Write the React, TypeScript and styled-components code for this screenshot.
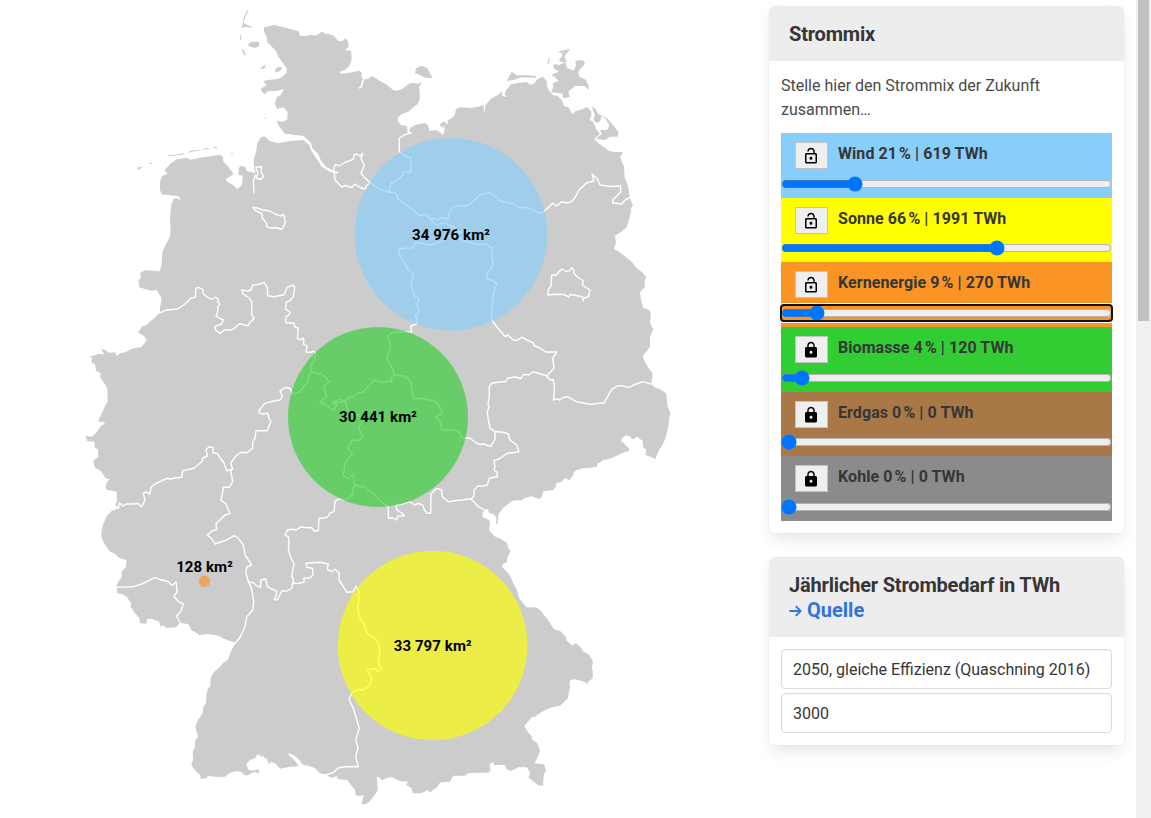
import React, { useState } from "react";
import styled, { createGlobalStyle } from "styled-components";
import { MdLock, MdLockOpen } from "react-icons/md";

const GlobalStyle = createGlobalStyle`
  *, *::before, *::after { box-sizing: border-box; }
  html, body { margin: 0; height: 100%; overflow: hidden; background: #fff; }
  body {
    font-family: Roboto, "Liberation Sans", sans-serif;
    font-size: 16px;
    line-height: 1.5;
    color: #4a4a4a;
  }
`;

const Page = styled.div`
  display: flex;
  width: 100%;
  height: 818px;
  overflow: hidden;
`;

const MapPane = styled.main`
  flex: 1;
  min-width: 0;
`;

const MapSvg = styled.svg`
  display: block;
  width: 757px;
  height: 818px;
`;

const Land = styled.path`
  fill: #ccc;
`;

const IslandChain = styled.path`
  fill: none;
  stroke: #ccc;
  stroke-width: 1.1;
`;

const Border = styled.path`
  fill: none;
  stroke: #fff;
  stroke-width: 1.4;
  stroke-linejoin: round;
  stroke-linecap: round;
`;

const Bubble = styled.circle`
  opacity: 0.65;
`;

const BubbleLabel = styled.text`
  font: 700 15px Roboto, "Liberation Sans", sans-serif;
  letter-spacing: 0.08px;
  fill: #000;
  text-anchor: middle;
`;

const Sidebar = styled.aside`
  display: flex;
  flex-direction: column;
  gap: 24px;
  width: 379px;
  padding: 6px 12px;
`;

const Panel = styled.section`
  border-radius: 6px;
  box-shadow: 0 8px 16px -2px rgba(10, 10, 10, 0.1), 0 0 0 1px rgba(10, 10, 10, 0.02);
`;

const PanelHeading = styled.h2`
  margin: 0;
  padding: 16px 20px 14px;
  border-radius: 6px 6px 0 0;
  background: #ededed;
  color: #363636;
  font-size: 20px;
  font-weight: 700;
  letter-spacing: -0.18px;
  line-height: 25px;
`;

const SourceLink = styled.a`
  display: flex;
  align-items: center;
  gap: 5px;
  color: #3273dc;
  letter-spacing: 0;
  text-decoration: none;
`;

const ArrowIcon = styled.svg`
  width: 13px;
  height: 12px;
  margin-top: 1px;
  fill: none;
  stroke: currentColor;
  stroke-width: 1.9;
`;

const PanelBody = styled.div<{ $gap: number }>`
  display: flex;
  flex-direction: column;
  gap: ${(p) => p.$gap}px;
  padding: 12px;
`;

const Intro = styled.p`
  margin: 0;
  padding-top: 1px;
  margin-bottom: -1px;
`;

const SourceRow = styled.div<{ $color: string }>`
  display: flex;
  flex-direction: column;
  height: 64.65px;
  background: ${(p) => p.$color};
`;

const RowHead = styled.div`
  display: flex;
  gap: 10px;
  height: 42.7px;
  padding: 9px 14px 0;
`;

const LockButton = styled.button`
  display: flex;
  align-items: center;
  justify-content: center;
  width: 33px;
  height: 27px;
  padding: 1px 1px 0 0;
  border: 1px solid #c3c3c3;
  border-radius: 0;
  background: #efefef;
  color: #000;
  font-size: 18px;
`;

const RowLabel = styled.strong`
  color: #363636;
  font-weight: 700;
  letter-spacing: 0.07px;
  line-height: 24px;
`;

const Slider = styled.input<{ $active: boolean }>`
  display: block;
  width: 100%;
  height: 16px;
  margin: 0;
  outline: ${(p) => (p.$active ? "-webkit-focus-ring-color auto 1px" : "none")};
`;

const Field = styled.input`
  display: block;
  width: 100%;
  height: 40px;
  padding: 8px 11px 6px;
  border: 1px solid #dbdbdb;
  border-radius: 4px;
  background: #fff;
  box-shadow: inset 0 1px 2px rgba(10, 10, 10, 0.05);
  color: #363636;
  font: 16px/24px Roboto, "Liberation Sans", sans-serif;
`;

const Scrollbar = styled.div`
  width: 15px;
  padding: 0 2px;
  background: #f0f0f0;
`;

const ScrollThumb = styled.div`
  height: 321px;
  background: #c1c1c1;
`;

const mainland =
  "264,27.3 268,26.3 275,25 280,26.5 286.7,28 298.7,31.3 300,35.7 305,36 310,35 316.7,35.3 320,33 322,31.3 325,33.7 329,34 333.3,35.5 336,38 338.3,41.3 342.7,41 345,38 347,40 348.3,42.7 348.7,46.7 345,50.3 351,50.7 351.7,58.3 350.5,63 348.7,66.7 345,69.8 339.3,72 341,73.8 346.7,73.3 359.3,70.7 362,72.7 361.3,77 363,79 361.3,83 360.5,86 358.3,88 359.5,88.8 362.3,87.3 363,83 364.7,79.3 368,79 371.3,76.3 374,77 380,81 385,83.5 390,87.3 393,90 396.7,90.7 401.7,89.3 406,86 410,83.3 415,83 418,84 421.7,81.7 419,87.3 419.7,93 419.7,100 417,104.5 413.3,107.3 408,112 403.3,113.3 398.3,116.7 397.7,120.7 401,125.3 406.7,125.7 407.7,133 411.7,134.5 412,133 409,131 410,128 415,125.3 420,123.7 425,123 428.3,126 429.3,130.7 436.7,130.3 443.3,134.7 444.5,129 445.3,124 443.5,128 441,126 439.3,126 441,123 443.3,122 445,121.7 447.7,124.7 447.7,120 451,119 454.7,115 456,109.3 460,107.3 465,107.5 470,108 477,107 483.3,105 484,111 485,113.3 485,108 485.7,105 490.7,99 496,96 500,93.3 501.7,90.7 502.3,96 506.7,97 504.7,94 506,90 509,87.3 511,84 514,83.7 520,82.7 526.7,82 530.7,85 534.7,83.3 537.3,79.3 542.7,76.7 546.7,81 547,86 549,90.7 553,95.3 558,96 561.7,100 564,106 568,107 570,110 572.7,114.3 574.7,111.7 579,110 583.3,109 586,107 588.3,108 591.5,111.7 591,117 589.3,119.3 593,122 595,126 596,129 600,134 594,139 597,142 603.3,146.7 609,151 615,152.3 622.3,151.7 622.3,154 620,156.7 622,162 624,166.7 624.5,176.7 628.3,186.7 629,194 630.7,200 633,205.3 631,208 631,212 629.3,218.3 626.7,227.3 621,232 615,235.7 616,243.3 613.7,249 618,251 623.3,255 631.7,261.7 636.7,268.3 642,272 646,276.7 644.5,282 645,287.3 641.5,290 640,293.3 641,300 643.3,308.3 647,309 650.7,311.7 650.7,316 650,323.3 653.3,329.3 651,334 650,336.7 650,346.7 647,351 642.7,355.7 644,360 646.7,365 650,370 652.7,373.3 652,379 651,384 655,387.5 660,389.3 666,393.3 667,400 667.5,406 670.3,413.3 669,420 668.3,426.7 666.5,434 664,442 658.3,451.7 655.3,459 651.7,457.3 645.3,455 646.3,449.3 643.3,447.7 642.7,440.7 636.7,436.7 634,439 631.7,438.7 630,436.5 626,435.3 621.7,438.3 621,442 623.5,442.5 626,446 629,448 629,451 625,452 620,454 614,457 608.3,459.3 603,460 600,462.7 598,463 596.7,466.7 590,468 583,468.3 576.7,470 574,472 573.3,475 569.3,480.3 565,477.7 561.7,481.7 556.7,483 555,488 552.7,490 543.3,491.3 542,496 540,499 536,498 531.7,496.3 525,497.7 521.7,500.3 516,500.2 511.7,501 507,505 503.3,507.7 500,512 498.3,515 497.5,523.7 496,523.7 496.5,518 494.7,515.5 493,514 489,513 488,509 485,510 482.5,513 482.5,517 489,520 490,524 489,530 494,536 501,539 507.3,543.3 508,548 510.7,550.7 507.5,557 506.7,562.3 503,564 502,566 504,569 508.3,573.3 511,578 513.3,583.3 517.3,590.7 519,597.7 524.3,605 527.3,607.5 536,607.3 540,610 543.3,614 548,620 553.3,628.3 556,630 560,630.7 565.7,636.7 566.7,640.7 572.7,645.7 575.7,643 580.7,647.3 582.7,651.3 588.3,654 591,658 593,661.7 592,667 592.7,671 592.7,678.3 588,682 587,684.3 585,682 580,680.5 575,679.3 570,680 569.5,684 570.3,687.3 569,691 568,698.3 564,702 560,705.7 553,707 546.7,709.3 540,713 535,716.7 532,717 524.3,726 528.3,732.7 531.7,736 531.7,739 537.3,743.3 540.3,751 538,756 534.7,763.3 544,764.3 546,770.7 544,774 543.3,780 543.3,785.7 538.3,785.3 533,781 528.3,777.7 530,774 529.3,770.7 526.7,767.3 518.3,767.3 511.7,770.7 508,770 506,768.3 505,765 494,765 493.7,761.7 489.3,764.3 490.7,770 488.3,772.7 478,772.7 468.3,773.3 465,775.7 453.3,775.7 451,780 450,781.7 445,782 440,782.7 436.7,787.7 434,789 430,792.7 427.3,790 424,792 420.7,793.3 412.7,793.3 411.7,788.3 406,784.7 408,781.7 400,781 391.7,777.3 387,778 381.7,780.3 379,776.7 376.7,776.7 377.3,784 377.7,790 374,796 370,801 366,804 361.7,804.3 363.7,795 360,796 355.7,795.3 355,790 350,784 347.3,780 338.3,779.3 336.7,776 331.7,778 326.7,775 320,773.2 315,768.3 309,766 303.3,765 299.3,760 295,756 288.3,752.7 288.7,755 295,760.7 298.7,766.3 290,766.7 280,768.7 276,764 271,761.7 269,764.3 266.7,758.3 264,758 263.5,755.5 261.7,756.7 257.7,754.3 255,758.3 250,760 246.3,764 248.3,770 254,770.5 259.3,769.3 258.7,773.7 255,772 251.7,773 248,775.3 245,775.3 241,772 236.7,771 230,772.7 225,776.7 218.3,777 213,776.5 208.3,776 206,778.3 200.7,778.7 200,775 195,770 191.3,765.3 193,760 192.7,751.7 195,747 195.3,740 198.3,736.7 197,733 195.3,726.7 198,720 202.7,713.3 203.3,706.7 206,703.3 206.3,698 206.7,693.3 208,688 210.3,686.7 210.7,677.3 214,672 220,666.7 223,663 228.3,659.3 230,654 232.3,648.3 236,642.7 226.7,640 218.3,635.7 208.3,634 199.3,635 195,632 191.7,630.7 190,627 188.3,624.3 180,622.7 176,627.3 166.7,628 162.7,625.3 160.7,627.3 159.3,621.7 151.7,618.7 147.3,619 146.3,623.7 140,623.3 139.3,618.3 135,613 130.7,606.7 131,603 126.7,596.7 122,594 117.3,593.3 116.7,585 119,581 121.7,576.7 121.7,571.7 126,566.7 126.5,560 120,558.3 115,554 109.3,551 106,546 103.3,541.7 101.5,537 101.3,533.3 102.5,526 104.3,521.7 106.7,516 111.7,511 118.3,508.3 115,504 117,501.7 116.7,491.7 111,490.5 106.7,490 105.7,485.7 107,482 110,479.3 105.7,478.3 103,474 100.7,470.7 95,467.7 93.3,461.7 95,459 98.3,457.3 98,449.3 94.7,447.7 94.7,441.7 87.3,441 85.3,436 91.7,436.7 95,434 98.3,430 101,426 104.7,424 104,421.7 98,421.7 100,417 102.7,411.7 105,406 107.7,401.7 107.3,388.3 104,383 100,376.7 100.7,373.3 96,370.7 95,364 91.7,363.3 92,358.7 90,356.7 98.3,354 104.3,354.3 101,349 105,350 109.3,352.7 115,352.3 116.7,355.7 120,353.3 125,352.3 133.3,348.3 141,347.3 144,344 146.7,340 144,336 137.7,332.3 140,330 141.7,326.7 146.7,325 150.7,320.7 154,318.5 160,312.7 160,308.3 161.7,298.3 159,294 156.7,290 151.7,290.7 145,289 139.3,287.3 138.3,280 141,278.3 140,272.7 145,270.3 160,271.3 161.7,263.3 162.3,251.7 166,244 170,236.7 170.7,228 170,220 171.3,205 174,198.3 177,198.5 181,200 178.3,196 170,195.3 161.7,194.3 160,190 160,181.7 162.3,176 167.3,174 164.7,170 170,164 176.7,159.3 186.7,157.7 190,159.7 205,157 220,154.7 223,157 223.3,161.7 228,166 230,170 232,171 233.3,174.3 225.7,179.3 228,182.5 231.7,184 237.3,189 241,186 242.3,182.7 242.7,175.7 238.3,174.7 239,167.7 241,165.8 245,167 246.7,170.7 255.7,173.3 254,168 253.7,160 256,152 257.3,143.3 261,137.3 264.3,136.3 270,141 278.3,143.3 290,141 303.3,140 309.3,145 311,150 315,156.7 319,162 321.7,166.7 330,171.7 336.7,174 339,172.3 333.3,170.7 326,166.7 321,160.7 318.3,154 312.3,148.3 311,142.7 303.3,135.7 295,135 288.3,134 285,134 282,130 279.3,126.7 276.7,120.7 283.3,121.7 287.3,119.3 287.7,111.7 283.3,107.3 277.3,109 274.7,104 276.7,97.3 280.7,95 284,89.3 276.7,91 268.3,91 265,94 262,92 261,88.3 266.7,85.5 263.3,81 270,79.8 278.3,79 283,76 286.7,72.7 286.7,68.3 283,63 278.3,56.7 276,51 273.3,48.3 267.3,42.3 266.7,36.7 264,31.7";

const islands = [
  "554,64 559,65 565,62 567.3,68.3 574,70.7 576,65 575,61.7 578,60.3 583.3,60.5 584.7,63 584.3,65 580,69 578.3,71.7 579.3,76.7 586,80 588.7,86 588.3,90 585,86 575,86 568.3,91.7 570,96.7 566,98 562.7,97.7 563,94 560,93.3 551,92.3 553.3,87.3 552.7,83.3 558.3,81 554,76 552.3,77.3 552.7,74 559.3,71.7 553.3,68.3",
  "557.3,52.3 562,50.5 570,49.3 568,52 565,55 565,58 567,62 561,62 559,60 562.3,56 562,53",
  "511.7,71.7 516.7,75.3 527,75.3 536,76 535.7,77.7 521.7,77.3 513.3,80 506.7,81 509,77",
  "416,68.3 421.7,65.7 427.3,68.3 430,73 432.7,78 425,77.7 420,75 415,73.3",
  "591.7,106.7 595,108.3 598.3,114 607.3,118.3 613,125 618.3,131.7 617.7,136.7 610,136.7 605,140 596,138.7 601.7,134 600,130 607.3,130 609.3,125 606,119.3 602,116 600,121 596.7,123.3 593.3,120 595,115",
  "243.3,19 244.5,24 252,26.7 252,27.7 245,27 241.5,28 243,23",
  "247.7,44.3 251.7,41.7 259,42 259,46 255,48 250,46.7",
  "241.7,49 243.5,50 246,55 244,55.3",
  "260.7,67.7 266,64.3 265,67.7 261.7,69.7",
  "275,69.3 278.3,66.7 282.7,67.7 279.3,71.3 275.7,72.3",
  "136.7,167.7 144,166.3 141,168 139,170",
];

const islandChain =
  "M248.3,10 L246,14 L243.5,20 M168.3,155.5 L176,155 L184,153.8 M189,153 L189.5,151.5 L199.5,150.3 M203,149.3 L208.5,148.5 M149.5,163.5 L152,163.2 M231,153.7 H233 M265,117.5 L266,119 M549.5,58 L548,64 M240.6,35 V40 M214,147.6 H217";

const borders = [
  // Nordrhein-Westfalen / Niedersachsen
  "160,312.7 166.7,310 177.7,309 185,304 190.7,298.3 195.3,297.3 196,288.3 198.3,287.3 202.7,289.3 203.3,294 210.7,299.3 215.7,297.3 218.5,299 217.5,302 220,304 217.7,306.7 217.7,312 216,316 219,318 223.3,320 221.7,324 214.7,326.7 216,330.7 220.7,333.3 224,330 230,330 233.3,329.3 239.3,323.7 248.3,325.7 250,322 252,321 254,318 251.7,315 251.7,302 249,297.5 243,294 241.7,290 247,291 251,290 252.7,285 258,284.5 264,282.7 267.3,287.3 267.7,295.7 274,296.7 284,294.7 287.3,287.3 292.7,285 294.7,287.3 293.3,296.7 290,300.5 286,302.3 285.7,309.3 290,312.3 289,315 286,316.7 285.7,322.7 294,323.3 295,327 298.3,328.3 297.3,338 300,340 303,338 304,340.7 303.3,344 307,346 306,352 310,352.3 313,351.3 315.3,352.3 315,360 310.7,365 310.7,373.3",
  "310.7,373.3 308.3,376.7 308.3,381.7 304,386 300,391.7 292.7,394.3 290,388.3 286,387.5 280,390.7 282.3,396 280,400 273.3,401 265,403.3 259.3,410 259,412.7 261.7,414 267.7,413.3 269,418 270.7,421.7 267.3,430.7 256,430.7 255,438.3 252.7,442 252.7,448.3 246.7,452.7 240.7,452.3 235,457 230.7,463.3 232.7,469.3 226.7,470.7",
  // Nordrhein-Westfalen / Rheinland-Pfalz
  "226.7,470.7 224,463 221.7,460 217,453.3 213.3,453.3 213,447.7 209.3,446.7 206,449.3 207.3,456 203,458 201.7,461.7 194,468.3 182.7,470.7 181.7,477.3 175,478 170,479.3 168,478 160,481.7 155,484 151,487.3 150,494 146,492 143.3,493.3 145,500 141.7,506.7 138,503.5 131.7,504 126,504 122.7,506 119.3,502.7 118.3,508.3",
  "232,469 230.7,470.7 232.7,481.7 229.3,487.3 223.3,487.3 222.5,493 221,500 226,504 230,513.3 225,515 221.7,518.3 216,524 216.7,529.3 212,531 207.3,535 212,539 215,544 226.7,540 234,535.7 238,538 243.3,545 245,555 251.7,565 247,567 245.7,571.7 248.3,581.7 251,587 252.7,595 253.7,602 252.7,610 246.7,616.7 245,626.7 240,637.3 235.7,642.7",
  // Saarland
  "117.3,587.3 133.3,586.7 141.7,584 155,577.7 160,579.5 168.3,581.7 172,585.5 176,582 177.3,591.7 174,596.7 179,602 183.3,604 181,611 176.7,616 180,622.7",
  // Hessen, Bayern, Baden-Württemberg
  "248.3,581.7 253.3,582.7 257,586 260.7,587.3 260.7,580 265.7,579 267.3,586.7 276.7,591.7 276,596 274,599.3 277.3,600 281.7,591 287,591 291.7,588.3 292.7,583.3",
  "292.7,583.3 293.5,579 291.7,576.7 294,563.3 291,558 288.3,550 289,543 288.3,536.7 285,535 287.3,530 292.7,529.3 296,530 301.7,526.7 305,527.5 311.7,527.7 314,531 318.3,531 319,518.3 327.3,517.5 330,513 334,511.7 335,501.7 338.3,499 346.7,500 353.3,493.3 353,488 356,485",
  "292.7,583.3 298,583.5 304,582.3 304,578 310,578 313.3,574.3 312.3,568.3 306.7,567.3 306,563.3 313,562.8 320,562.3 328.3,564 327.3,569.3 331.7,571.7 335,569.3 339.3,573.3 339,580 343,586 346.7,592.3 353.3,591.7 356,586 359.3,591.7 358,595 360,600 357.5,605 359.3,616.7 365,626.7 366.7,632.7 376.7,640 380,648.3 378.3,663.3 381.7,669.3 378,672 376,669 370,669 367.3,671 371.7,678.3 370,685 363.3,690 357,689.5 352,693 349,699.3 353.3,708.3 359.3,728.3 355.7,740 358,748 355.7,756.7 358.3,766.7 354.5,766.5 345,766.7 338,768 333.3,772.7 325,775",
  // Thüringen
  "310.7,373.3 315,372 316.7,374 321,373.5 325,376.7 329.3,381.7 324,386 326.7,396.7 320,401.7 325,405 333.3,410 337,405 333.3,402 340,399.3 345,401 348,410 352,414 358,415 363.3,420 358.3,428.3 362.7,436.7 358.3,440.7 352.7,440 347.3,448.3 352.7,453.3 345,463.3 343.3,476 348.3,478.3 353.3,474 354,483.3 356,485",
  "333.3,403.3 341,402 345,401.7 349,397 353.3,396.7 358,393 363.3,391.7 374,380 383.3,382.7 387,381 391.7,382 391,378 394,375",
  "356,485 360,487 363.3,486 368,491 371.7,491.7 378,499 383.3,503.3 388.3,507 388.3,518 393,518 396.7,520 397.7,516 404.3,515.7 402,513 396.7,510 396,505 403,504 409.3,501.7 415,505 418,503.5 422.7,505 424,509 427,513.3 430.7,513.3 431,494 436.7,488.3 441.7,490 442.3,496.7 448.3,501.7 456,500.5 463.3,500 467,499 471,499.3 476,504 478.3,506.7 486,510.7",
  "471,499.3 474,496 474,490 478,486 483,486 487.3,485 489.3,478.3 497.3,476.7 497,472 494,470 495,466.7 494,460.7 499,459 507.3,453.3 519,451.7 516.7,445 510,440 508.3,434 502,432 495,431.7",
  "495,431.7 495,439.3 490.7,446.7 484,444 478.3,444.3 470,438.3 461.7,437.7 458.3,430.7 448,430 441.7,430 441,422.7 435.7,416.7 442.7,413.3 439,406 435,401 424,399 413.3,398.3 410.7,381.7 405,376 394,375",
  // Sachsen-Anhalt
  "394,375 393.3,370 386.7,358.3 390.7,346.7 389,340 387.3,336.7 391.7,332.7 400,332 411.7,331.7 410.7,326 416.7,324 417,320 415.5,315 419.3,312 417,305 419.3,298.3 415,296.7 410.7,283.3 413,278 412.7,273.3 408.3,270 404,262 399,253.3 399,249 408,248 413.3,247.7 415,242.3 430,245 441.7,241.7 448,236 455,236 460,239 466.7,241.7 476.7,244.3 486,244.3 492.7,248.3 491.7,256 493,262 491.7,268.3 488,272 486.7,278.3 491,280 496.7,283.3 494,292 491.7,308.3 491.7,320 497,327 505,336.5 508,335 513.3,340 517,340.5 521.7,337.3 533.3,343 534,345.5 540,348 546,352 556.7,352 552.7,358.3 554,368.3 546.7,376",
  // Sachsen
  "546.7,376 541,374 533.3,371.7 529,375 523.3,374.5 521,378.5 515,377 507.3,378.3 506,381.5 499,382 491.7,383.3 489.3,387 489.3,396.7 488,404 489.3,406.7 487.3,411.7 488,418 490,428.3 495,431.7",
  "546.7,376 550,380 553,379.5 554.3,385 554.3,393 553.3,400 557,399 560,400 563,397.5 567.3,396.7 576.7,401.7 590,404.3 604.3,402.7 611.7,389.3 618.3,385.7 623,386 628.3,387.7 636,384 643.3,381.7 651,384",
  // Mecklenburg-Vorpommern
  "431.7,218.3 438.3,220 441,217.5 448.3,218.7 450,210 455,206 461.7,206 466.7,206 472,202 480,195 485,193.5 490,192.7 496,197 501.7,201.7 513.3,204 520,208 528,207.5 535,211.5 541.7,213.3 547,208.7 552.7,203.3 556.7,206 561.7,201.7 567,203 571.7,201.7 576,196 578.3,190.7 586.7,182.7 594,181 592,174 597,178.5 600,185 611,186.5 620.7,186 620.7,192 612.7,200 612.7,203 621.7,204 625,200 630.7,197.3",
  "409.3,133.3 404,135 399.3,138.3 399.3,151.7 405,156 410.7,158 410.7,171.7 403.3,171.7 403,175 396,181 390.7,183.3 389,192.3",
  "370,182.7 378,188 389,192.3 395,192.3 398.3,199.3 404,203 413.3,210 420,216 426,214 430,219 436.7,225 445,222.7 450,226 454,227 458,232 462,232 455,236",
  // Hamburg
  "333.3,170.7 335,165 337,164.5 339.3,166 346,162 353.3,159.3 354,155 356.7,154 360,156 362.7,153.3 361,159 364.3,165 361,173.3 365,178 370.7,183.3 367,185 365,189 361,188 355,184 352,187.5 345,185.5 341.7,187 335,180 334.3,173.3",
  // Bremerhaven, Bremen
  "255.7,167.3 261.7,166.7 261,171 263.3,176.7 261,179.5 256,178 258,173.3 255.7,167.3",
  "253.3,207.3 257,208 263.3,210 270,211 275,214 280.7,216 283.3,214.3 285.3,221.7 284,226 281.7,229.3 275,227.5 272,228.5 266.7,226.7 266.5,223 262.3,218.3 261.7,213.3 255,210.5 253.3,207.3",
  // Berlin
  "551.7,275 556,275 561.7,269 566.7,271.7 570,270.5 571.7,267.7 574,270 574,273.3 577,276.5 583.3,281 582.3,285 590,290 588.3,296.7 583.3,298.5 583.3,300.7 582.3,296.7 576,295.5 570,294.5 569,297 564,294.5 556.7,294.3 547.7,295 548.5,289 551,286 551.7,275",
];

interface Region {
  color: string;
  x: number;
  y: number;
  r: number;
  labelY: number;
  label: string;
}

const regions: Region[] = [
  { color: "#87cefa", x: 451, y: 234.3, r: 96.4, labelY: 240, label: "34 976 km²" },
  { color: "#ffff00", x: 432.7, y: 645.5, r: 94.8, labelY: 651, label: "33 797 km²" },
  { color: "#fa9425", x: 204.5, y: 581.3, r: 5.8, labelY: 572, label: "128 km²" },
  { color: "#32cd32", x: 378, y: 417, r: 90, labelY: 422, label: "30 441 km²" },
];

const sources = [
  { name: "Wind", share: 21, twh: 619, color: "#87cefa", locked: false, active: false },
  { name: "Sonne", share: 66, twh: 1991, color: "#ffff00", locked: false, active: false },
  { name: "Kernenergie", share: 9, twh: 270, color: "#fa9425", locked: false, active: true },
  { name: "Biomasse", share: 4, twh: 120, color: "#32cd32", locked: true, active: false },
  { name: "Erdgas", share: 0, twh: 0, color: "#a97847", locked: true, active: false },
  { name: "Kohle", share: 0, twh: 0, color: "#8b8b8b", locked: true, active: false },
];

function GermanyMap() {
  return (
    <MapSvg viewBox="0 0 757 818">
      <Land d={`M${mainland}Z`} />
      {islands.map((points) => (
        <Land key={points} d={`M${points}Z`} />
      ))}
      <IslandChain d={islandChain} />
      {borders.map((points) => (
        <Border key={points} d={`M${points}`} />
      ))}
      <Border d="M255.5,175 L253.3,181.7 L254,193" />
      {regions.map((r) => (
        <Bubble key={r.label} cx={r.x} cy={r.y} r={r.r} fill={r.color} />
      ))}
      {regions.map((r) => (
        <BubbleLabel key={r.label} x={r.x} y={r.labelY}>
          {r.label}
        </BubbleLabel>
      ))}
    </MapSvg>
  );
}

export default function App() {
  const [shares, setShares] = useState(sources.map((s) => s.share));
  return (
    <Page>
      <GlobalStyle />
      <MapPane>
        <GermanyMap />
      </MapPane>
      <Sidebar>
        <Panel>
          <PanelHeading>Strommix</PanelHeading>
          <PanelBody $gap={12}>
            <Intro>Stelle hier den Strommix der Zukunft zusammen…</Intro>
            <div>
              {sources.map((s, i) => (
                <SourceRow key={s.name} $color={s.color}>
                  <RowHead>
                    <LockButton aria-label={s.name}>{s.locked ? <MdLock /> : <MdLockOpen />}</LockButton>
                    <RowLabel>
                      {`${s.name} ${shares[i]}\u202f% | ${s.twh} TWh`}
                    </RowLabel>
                  </RowHead>
                  <Slider
                    type="range"
                    min={0}
                    max={100}
                    value={shares[i]}
                    $active={s.active}
                    onChange={(e) => setShares(shares.map((v, j) => (j === i ? Number(e.target.value) : v)))}
                  />
                </SourceRow>
              ))}
            </div>
          </PanelBody>
        </Panel>
        <Panel>
          <PanelHeading>
            Jährlicher Strombedarf in TWh
            <SourceLink href="#">
              <ArrowIcon viewBox="0 0 13 12">
                <path d="M0.5 6H11.5M6.8 1.2L11.6 6L6.8 10.8" />
              </ArrowIcon>
              Quelle
            </SourceLink>
          </PanelHeading>
          <PanelBody $gap={4}>
            <Field defaultValue="2050, gleiche Effizienz (Quaschning 2016)" />
            <Field defaultValue="3000" />
          </PanelBody>
        </Panel>
      </Sidebar>
      <Scrollbar>
        <ScrollThumb />
      </Scrollbar>
    </Page>
  );
}
